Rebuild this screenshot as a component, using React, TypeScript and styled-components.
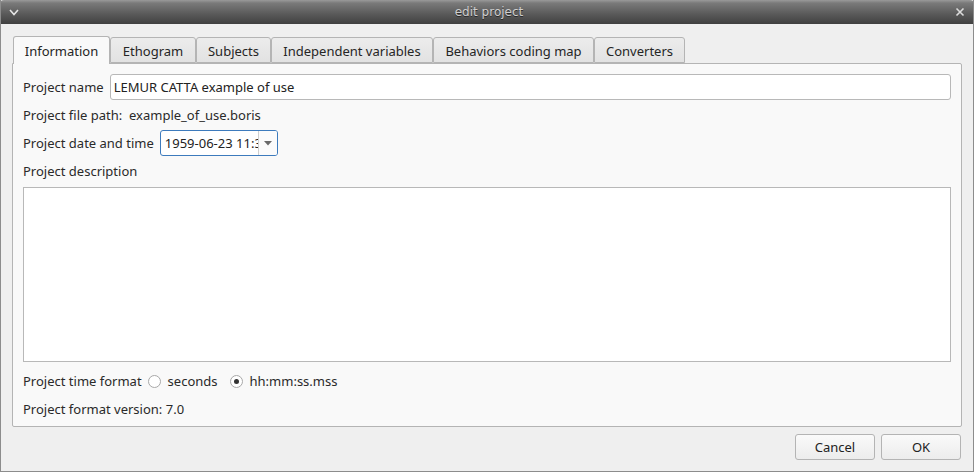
import React, { useState } from "react";
import styled, { createGlobalStyle } from "styled-components";

const GlobalStyle = createGlobalStyle`
  html, body {
    margin: 0;
    padding: 0;
    background: #efefef;
  }
  body {
    font-family: "Noto Sans", "Open Sans", sans-serif;
    font-size: 13px;
    color: #2a2a2a;
  }
`;

const tabs = [
  { label: "Information", width: 97 },
  { label: "Ethogram", width: 86 },
  { label: "Subjects", width: 75 },
  { label: "Independent variables", width: 162 },
  { label: "Behaviors coding map", width: 161 },
  { label: "Converters", width: 91 },
];

function App() {
  const [active, setActive] = useState(0);
  const [format, setFormat] = useState("hms");

  return (
    <>
      <GlobalStyle />
      <SWindow>
        <STitleBar>
          <STitleIcon>
            <svg width="10" height="7" viewBox="0 0 10 7">
              <path d="M1 1 L5 5.5 L9 1" fill="none" stroke="#e6e6e6" strokeWidth="1.6" />
            </svg>
          </STitleIcon>
          <STitle>edit project</STitle>
          <STitleIcon>
            <svg width="10" height="10" viewBox="0 0 10 10">
              <path d="M1.5 1.5 L8.5 8.5 M8.5 1.5 L1.5 8.5" fill="none" stroke="#dcdcdc" strokeWidth="1.6" />
            </svg>
          </STitleIcon>
        </STitleBar>

        <SBody>
          <STabBar>
            {tabs.map((t, i) => (
              <STab key={t.label} $active={i === active} $width={t.width} onClick={() => setActive(i)}>
                {t.label}
              </STab>
            ))}
          </STabBar>

          <SPane>
            <SRow>
              <SLabel>Project name</SLabel>
              <SInput defaultValue="LEMUR CATTA example of use" />
            </SRow>
            <SRow>
              <SLabel>Project file path:&nbsp; example_of_use.boris</SLabel>
            </SRow>
            <SRow>
              <SLabel>Project date and time</SLabel>
              <SCombo>
                <SComboText>1959-06-23 11:34</SComboText>
                <SComboArrow>
                  <svg width="8" height="5" viewBox="0 0 8 5">
                    <path d="M0 0 L8 0 L4 4.5 Z" fill="#6a6a6a" />
                  </svg>
                </SComboArrow>
              </SCombo>
            </SRow>
            <SRow>
              <SLabel>Project description</SLabel>
            </SRow>
            <STextArea />
            <SRadioRow>
              <SLabel>Project time format</SLabel>
              <SRadioOption onClick={() => setFormat("s")}>
                <SRadio $checked={format === "s"} />
                seconds
              </SRadioOption>
              <SRadioOption onClick={() => setFormat("hms")}>
                <SRadio $checked={format === "hms"} />
                hh:mm:ss.mss
              </SRadioOption>
            </SRadioRow>
            <SRow>
              <SLabel>Project format version: 7.0</SLabel>
            </SRow>
          </SPane>

          <SButtonBar>
            <SButton>Cancel</SButton>
            <SButton>OK</SButton>
          </SButtonBar>
        </SBody>
      </SWindow>
    </>
  );
}

const SWindow = styled.div`
  width: 974px;
  height: 472px;
  box-sizing: border-box;
  display: flex;
  flex-direction: column;
  border-left: 1px solid #8c8c8c;
  border-right: 1px solid #8c8c8c;
  border-bottom: 1px solid #8c8c8c;
  background: #efefef;
  overflow: hidden;
`;

const STitleBar = styled.div`
  height: 24px;
  flex-shrink: 0;
  display: flex;
  align-items: center;
  justify-content: space-between;
  padding: 0 8px 0 8px;
  margin: 0 -1px;
  background: linear-gradient(#9a9a9a 0px, #7a7a7a 3px, #5a5a5a 14px, #404040 24px);
  border-radius: 4px 4px 0 0;
`;

const STitleIcon = styled.div`
  width: 12px;
  display: flex;
  justify-content: center;
  align-items: center;
`;

const STitle = styled.div`
  color: #cfcfcf;
  font-family: "DejaVu Sans", sans-serif;
  font-size: 12px;
  text-shadow: 0 1px 0 #2a2a2a;
  padding-left: 4px;
`;

const SBody = styled.div`
  flex: 1;
  display: flex;
  flex-direction: column;
  padding: 11px 11px 0 11px;
`;

const STabBar = styled.div`
  display: flex;
  align-items: flex-end;
  height: 28px;
  padding-left: 1px;
  position: relative;
  z-index: 1;
`;

const STab = styled.div<{ $active: boolean; $width: number }>`
  box-sizing: border-box;
  width: ${(p) => p.$width}px;
  height: ${(p) => (p.$active ? 28 : 26)}px;
  margin-bottom: ${(p) => (p.$active ? -1 : 0)}px;
  display: flex;
  align-items: center;
  justify-content: center;
  padding-top: ${(p) => (p.$active ? 0 : 2)}px;
  border: 1px solid #b4b4b4;
  border-bottom: ${(p) => (p.$active ? "none" : "1px solid #b4b4b4")};
  border-radius: 3px 3px 0 0;
  background: ${(p) => (p.$active ? "#f9f9f9" : "linear-gradient(#ececec, #e2e2e2)")};
  color: #252525;
  cursor: default;
`;

const SPane = styled.div`
  height: 364px;
  box-sizing: border-box;
  border: 1px solid #b4b4b4;
  border-radius: 0 2px 2px 2px;
  background: #f9f9f9;
  padding: 10px 11px 0 10px;
  display: flex;
  flex-direction: column;
`;

const SRow = styled.div`
  display: flex;
  align-items: center;
  height: 26px;
  margin-bottom: 2px;
  gap: 6px;
`;

const SLabel = styled.span`
  white-space: nowrap;
  color: #2a2a2a;
`;

const SInput = styled.input`
  flex: 1;
  height: 26px;
  box-sizing: border-box;
  border: 1px solid #b8b8b8;
  border-radius: 3px;
  background: #ffffff;
  font-family: inherit;
  font-size: 13px;
  color: #222;
  padding: 0 3px;
  margin-right: -1px;
  outline: none;
`;

const SCombo = styled.div`
  width: 118px;
  height: 26px;
  box-sizing: border-box;
  border: 1px solid #3d7bbd;
  border-radius: 3px;
  background: #ffffff;
  display: flex;
  align-items: center;
  overflow: hidden;
`;

const SComboText = styled.span`
  flex: 1;
  overflow: hidden;
  white-space: nowrap;
  padding-left: 4px;
  color: #222;
`;

const SComboArrow = styled.div`
  width: 18px;
  height: 100%;
  border-left: 1px solid #cfcfcf;
  display: flex;
  align-items: center;
  justify-content: center;
  background: #fbfbfb;
`;

const STextArea = styled.div`
  height: 175px;
  box-sizing: border-box;
  border: 1px solid #b8b8b8;
  background: #ffffff;
  margin: 1px -1px 6px 0;
`;

const SRadioRow = styled(SRow)`
  gap: 0;
  & > ${SLabel} {
    margin-right: 6px;
  }
`;

const SRadioOption = styled.label`
  display: flex;
  align-items: center;
  gap: 7px;
  margin-right: 12px;
  cursor: default;
`;

const SRadio = styled.span<{ $checked: boolean }>`
  width: 13px;
  height: 13px;
  box-sizing: border-box;
  border: 1px solid #a8a8a8;
  border-radius: 50%;
  background: #ffffff;
  display: flex;
  align-items: center;
  justify-content: center;
  &::after {
    content: "";
    width: 5px;
    height: 5px;
    border-radius: 50%;
    background: ${(p) => (p.$checked ? "#333" : "transparent")};
  }
`;

const SButtonBar = styled.div`
  display: flex;
  justify-content: flex-end;
  gap: 6px;
  padding: 7px 1px 0 0;
`;

const SButton = styled.button`
  width: 80px;
  height: 26px;
  box-sizing: border-box;
  border: 1px solid #b4b4b4;
  border-radius: 3px;
  background: linear-gradient(#fafafa, #ececec);
  font-family: inherit;
  font-size: 13px;
  color: #222;
  cursor: default;
`;

export default App;
